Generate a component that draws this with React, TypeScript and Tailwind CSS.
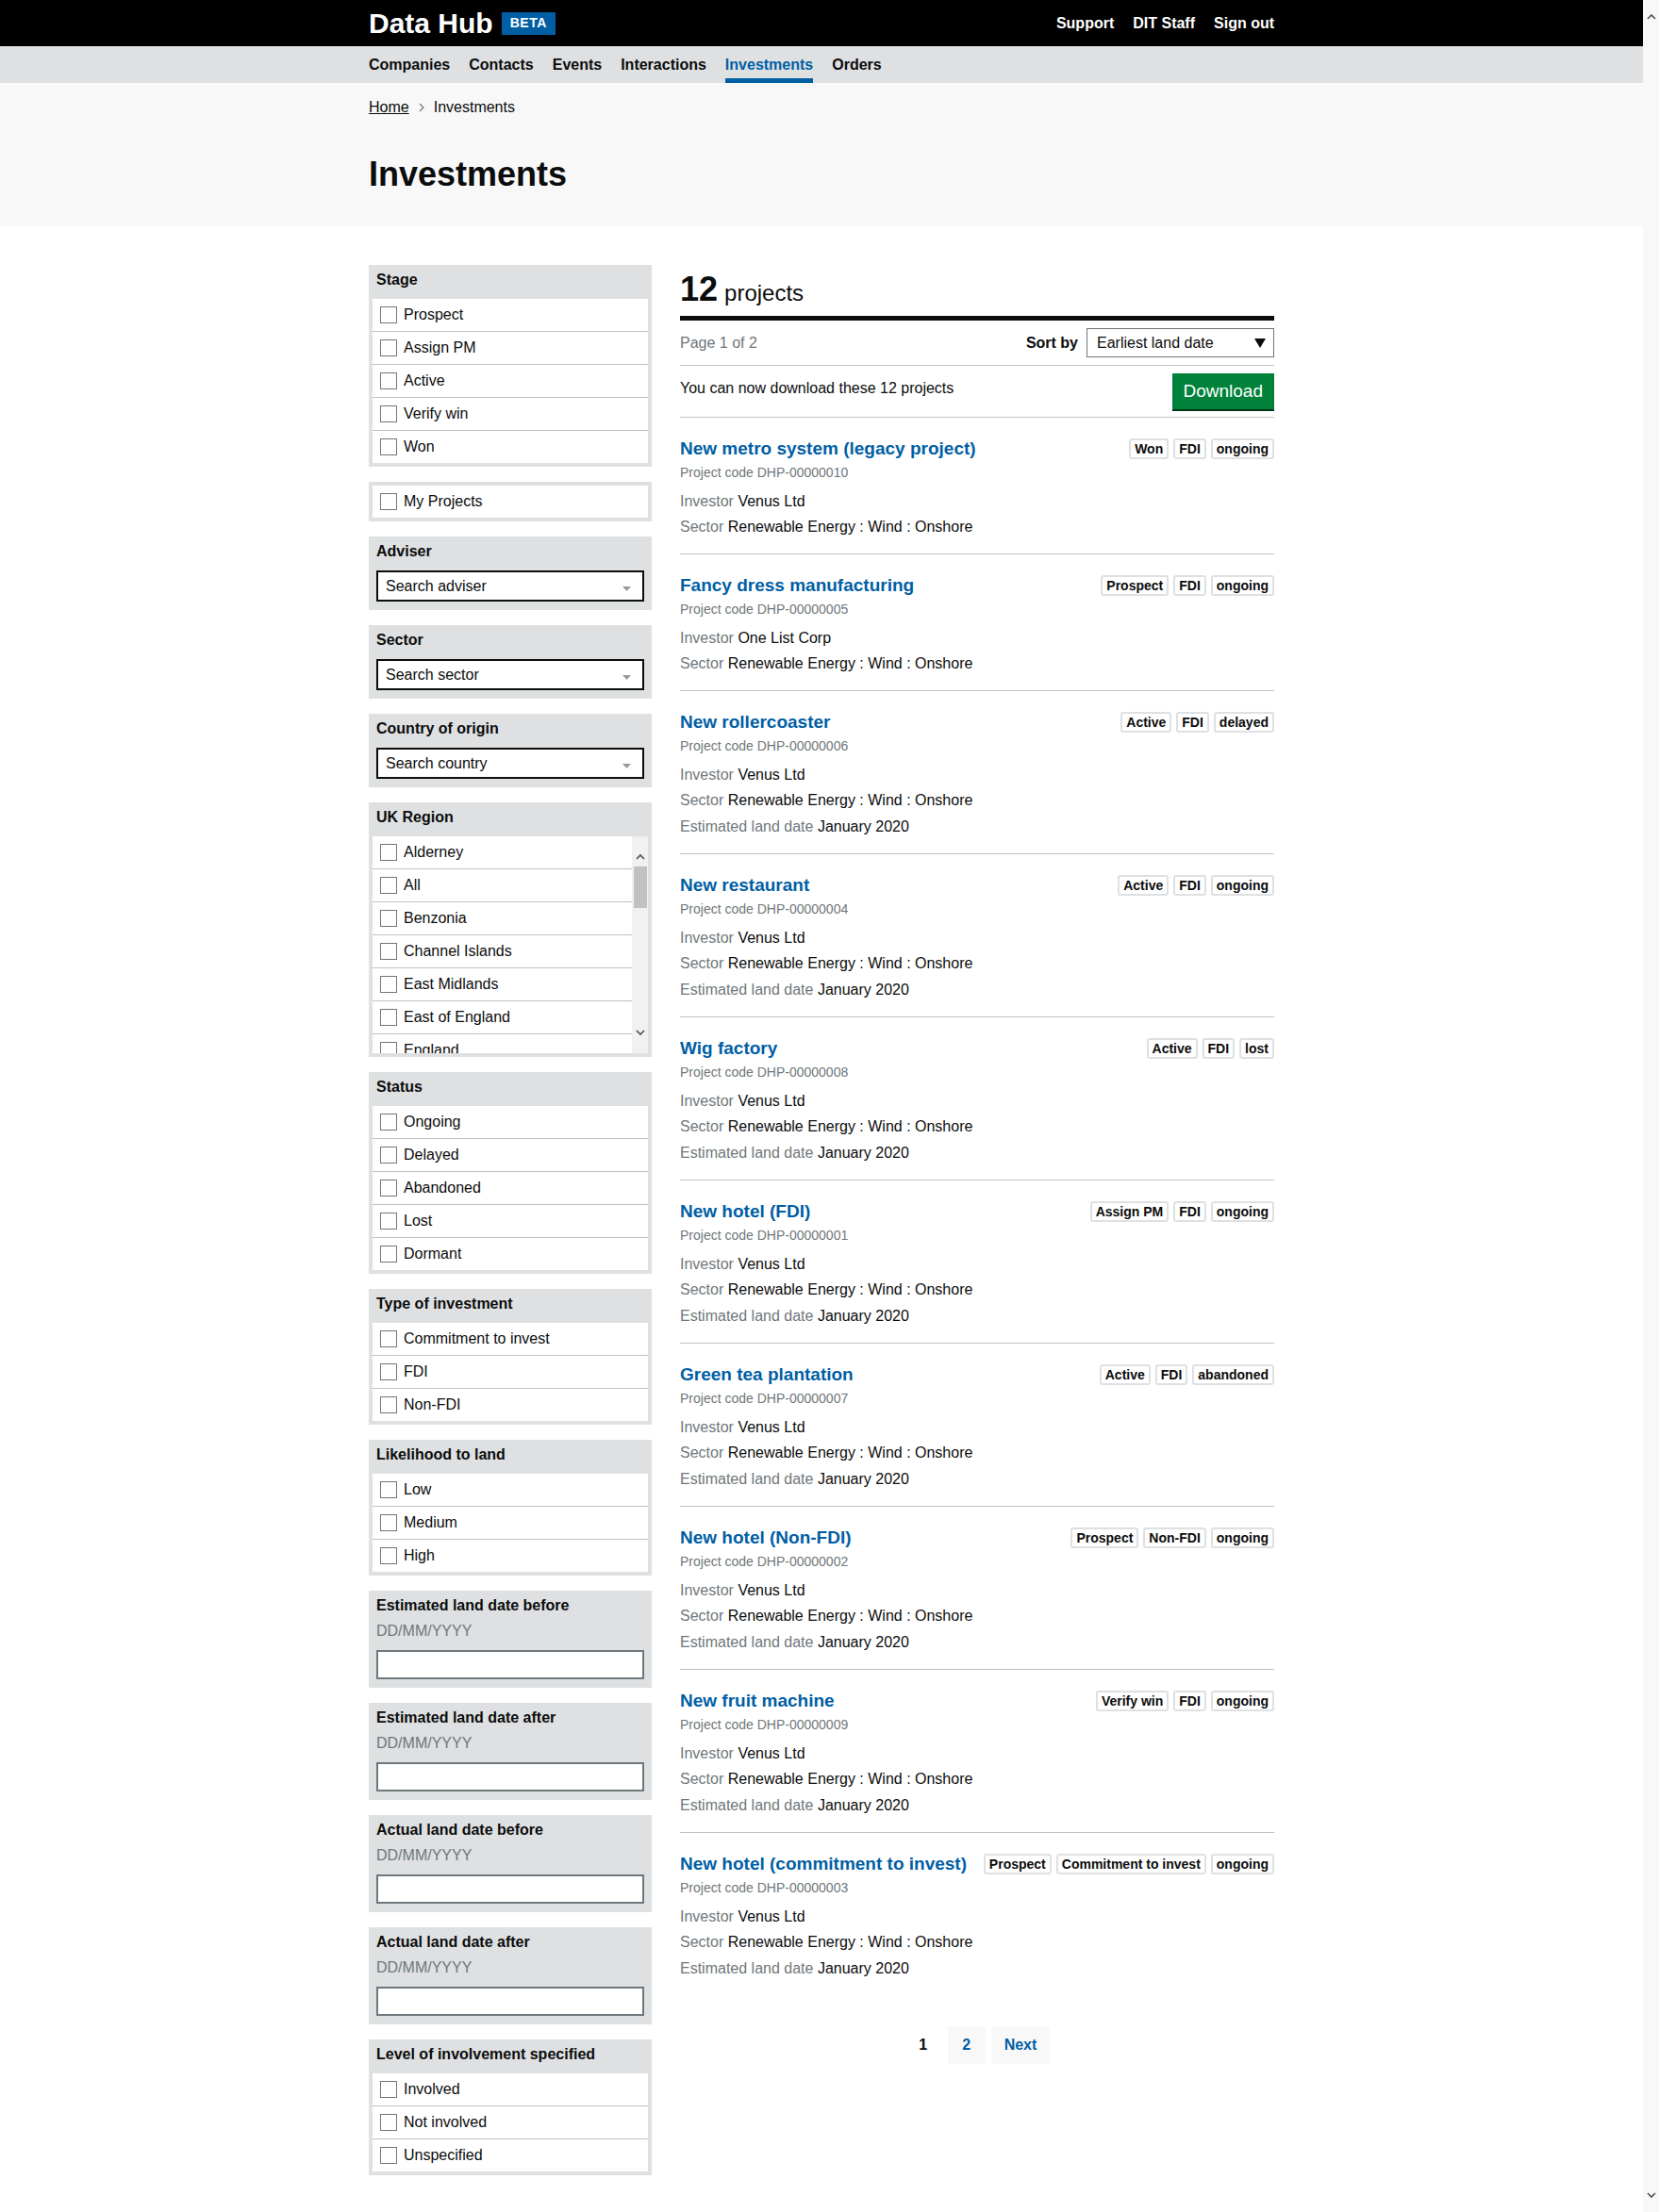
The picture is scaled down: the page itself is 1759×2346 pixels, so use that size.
import React from 'react'

// Data Hub — investment projects list with the filter sidebar
const stages = ['Prospect', 'Assign PM', 'Active', 'Verify win', 'Won']
const regions = ['Alderney', 'All', 'Benzonia', 'Channel Islands', 'East Midlands', 'East of England', 'England']
const statuses = ['Ongoing', 'Delayed', 'Abandoned', 'Lost', 'Dormant']
const types = ['Commitment to invest', 'FDI', 'Non-FDI']
const likelihood = ['Low', 'Medium', 'High']
const involvement = ['Involved', 'Not involved', 'Unspecified']
const dateFilters = ['Estimated land date before', 'Estimated land date after', 'Actual land date before', 'Actual land date after']

const projects = [
  { name: 'New metro system (legacy project)', tags: ['Won', 'FDI', 'ongoing'], code: 'DHP-00000010', investor: 'Venus Ltd', date: '' },
  { name: 'Fancy dress manufacturing', tags: ['Prospect', 'FDI', 'ongoing'], code: 'DHP-00000005', investor: 'One List Corp', date: '' },
  { name: 'New rollercoaster', tags: ['Active', 'FDI', 'delayed'], code: 'DHP-00000006', investor: 'Venus Ltd', date: 'January 2020' },
  { name: 'New restaurant', tags: ['Active', 'FDI', 'ongoing'], code: 'DHP-00000004', investor: 'Venus Ltd', date: 'January 2020' },
  { name: 'Wig factory', tags: ['Active', 'FDI', 'lost'], code: 'DHP-00000008', investor: 'Venus Ltd', date: 'January 2020' },
  { name: 'New hotel (FDI)', tags: ['Assign PM', 'FDI', 'ongoing'], code: 'DHP-00000001', investor: 'Venus Ltd', date: 'January 2020' },
  { name: 'Green tea plantation', tags: ['Active', 'FDI', 'abandoned'], code: 'DHP-00000007', investor: 'Venus Ltd', date: 'January 2020' },
  { name: 'New hotel (Non-FDI)', tags: ['Prospect', 'Non-FDI', 'ongoing'], code: 'DHP-00000002', investor: 'Venus Ltd', date: 'January 2020' },
  { name: 'New fruit machine', tags: ['Verify win', 'FDI', 'ongoing'], code: 'DHP-00000009', investor: 'Venus Ltd', date: 'January 2020' },
  { name: 'New hotel (commitment to invest)', tags: ['Prospect', 'Commitment to invest', 'ongoing'], code: 'DHP-00000003', investor: 'Venus Ltd', date: 'January 2020' },
]

function Chevron({ up }: { up?: boolean }) {
  return (
    <svg width="10" height="7" viewBox="0 0 10 7">
      <path d={up ? 'M1 6 L5 2 L9 6' : 'M1 1 L5 5 L9 1'} fill="none" stroke="#505050" strokeWidth="1.6" />
    </svg>
  )
}

function CheckRow({ label }: { label: string }) {
  return (
    <div className="h-[35px] last:h-[34px] flex items-center pl-[8px] gap-[7px] text-[16px] text-[#0b0c0c] shrink-0">
      <span className="w-[18px] h-[18px] border border-[#6f777b] bg-white shrink-0" />
      <span>{label}</span>
    </div>
  )
}

function Block({ title, children }: { title?: string; children: React.ReactNode }) {
  return (
    <div className="bg-[#dee0e2] p-[4px]">
      {title && <div className="h-[32px] pt-[2px] px-[4px] text-[16px] leading-[20px] font-bold text-[#0b0c0c]">{title}</div>}
      {children}
    </div>
  )
}

function CheckBlock({ title, items }: { title?: string; items: string[] }) {
  return (
    <Block title={title}>
      <div className="bg-white divide-y divide-[#bfc1c3]">
        {items.map(i => <CheckRow key={i} label={i} />)}
      </div>
    </Block>
  )
}

function SearchBlock({ title, placeholder }: { title: string; placeholder: string }) {
  return (
    <Block title={title}>
      <div className="mx-[4px] mb-[5px] h-[33px] border-2 border-[#0b0c0c] bg-white flex items-center justify-between pl-[8px] pr-[12px] text-[16px] text-[#0b0c0c]">
        <span>{placeholder}</span>
        <svg width="9" height="5" viewBox="0 0 9 5" className="mt-[6px]"><path d="M0 0 L9 0 L4.5 5 Z" fill="#999" /></svg>
      </div>
    </Block>
  )
}

function DateBlock({ title }: { title: string }) {
  return (
    <div className="bg-[#dee0e2] px-[8px] pt-[6px] pb-[9px]">
      <div className="text-[16px] leading-[20px] font-bold text-[#0b0c0c]">{title}</div>
      <div className="mt-[7px] text-[16px] leading-[20px] text-[#6f777b]">DD/MM/YYYY</div>
      <div className="mt-[10px] h-[31px] border-2 border-[#6f777b] bg-white" />
    </div>
  )
}

function Tag({ label }: { label: string }) {
  return (
    <span className="whitespace-nowrap border-2 border-[#dee0e2] rounded-[3px] px-[4px] text-[14px] leading-[18px] font-bold text-[#0b0c0c] bg-white">{label}</span>
  )
}

function Project({ p, last }: { p: typeof projects[number]; last: boolean }) {
  return (
    <div className={`pt-[20px] pb-[17px] ${last ? '' : 'border-b border-[#bfc1c3]'}`}>
      <div className="flex items-start justify-between gap-[5px]">
        <a className="text-[19px] leading-[25px] font-bold text-[#005ea5] whitespace-nowrap">{p.name}</a>
        <div className="flex gap-[5px] mt-[2px]">
          {p.tags.map(t => <Tag key={t} label={t} />)}
        </div>
      </div>
      <div className="mt-[3px] text-[14px] leading-[20px] text-[#6f777b]">Project code {p.code}</div>
      <div className="mt-[10px] text-[16px] leading-[22px]"><span className="text-[#6f777b]">Investor</span> <span className="text-[#0b0c0c]">{p.investor}</span></div>
      <div className="mt-[5px] text-[16px] leading-[22px]"><span className="text-[#6f777b]">Sector</span> <span className="text-[#0b0c0c]">Renewable Energy : Wind : Onshore</span></div>
      {p.date && (
        <div className="mt-[6px] text-[16px] leading-[22px]"><span className="text-[#6f777b]">Estimated land date</span> <span className="text-[#0b0c0c]">{p.date}</span></div>
      )}
    </div>
  )
}

export default function App() {
  return (
    <div className="flex h-[2346px] w-[1759px] overflow-hidden font-['Liberation_Sans',Arial,sans-serif] text-[#0b0c0c]">
      <div className="w-[1742px] shrink-0 bg-white">
        {/* header */}
        <header className="h-[49px] bg-black">
          <div className="w-[960px] mx-auto h-full flex items-center justify-between">
            <div className="flex items-center">
              <span className="text-[30px] leading-[34px] font-bold text-white">Data Hub</span>
              <span className="ml-[9px] h-[24px] px-[9px] flex items-center bg-[#005ea5] text-white text-[14px] font-bold tracking-[0.5px]">BETA</span>
            </div>
            <nav className="flex gap-[20px] text-[16px] font-bold text-white">
              <a>Support</a>
              <a>DIT Staff</a>
              <a>Sign out</a>
            </nav>
          </div>
        </header>
        <div className="h-[39px] bg-[#dee0e2]">
          <div className="w-[960px] mx-auto flex gap-[20px] text-[16px] font-bold">
            {['Companies', 'Contacts', 'Events', 'Interactions', 'Investments', 'Orders'].map(n => (
              <a key={n} className={`h-[39px] pt-[10px] leading-[20px] border-b-[5px] ${n === 'Investments' ? 'border-[#005ea5] text-[#005ea5]' : 'border-transparent text-[#0b0c0c]'}`}>{n}</a>
            ))}
          </div>
        </div>

        {/* page title */}
        <div className="bg-[#f8f8f8] h-[152px]">
          <div className="w-[960px] mx-auto pt-[16px]">
            <div className="flex items-center text-[16px] leading-[20px]">
              <a className="underline text-[#0b0c0c]">Home</a>
              <svg width="6" height="10" viewBox="0 0 6 10" className="mx-[10px]"><path d="M1 1 L5 5 L1 9" fill="none" stroke="#6f777b" strokeWidth="1.2" /></svg>
              <span>Investments</span>
            </div>
            <h1 className="mt-[41px] text-[36px] leading-[40px] font-bold">Investments</h1>
          </div>
        </div>

        <div className="w-[960px] mx-auto pt-[41px] flex gap-[30px] items-start">
          {/* filters */}
          <aside className="w-[300px] shrink-0 flex flex-col gap-[16px]">
            <CheckBlock title="Stage" items={stages} />
            <CheckBlock items={['My Projects']} />
            <SearchBlock title="Adviser" placeholder="Search adviser" />
            <SearchBlock title="Sector" placeholder="Search sector" />
            <SearchBlock title="Country of origin" placeholder="Search country" />
            <Block title="UK Region">
              <div className="h-[230px] flex bg-white">
                <div className="flex-1 overflow-hidden flex flex-col divide-y divide-[#bfc1c3]">
                  {regions.map(r => <CheckRow key={r} label={r} />)}
                </div>
                <div className="w-[17px] bg-[#f1f1f1] flex flex-col items-center">
                  <div className="mt-[18px]"><Chevron up /></div>
                  <div className="mt-[7px] w-[14px] h-[44px] bg-[#c1c1c1]" />
                  <div className="flex-1" />
                  <div className="mb-[18px]"><Chevron /></div>
                </div>
              </div>
            </Block>
            <CheckBlock title="Status" items={statuses} />
            <CheckBlock title="Type of investment" items={types} />
            <CheckBlock title="Likelihood to land" items={likelihood} />
            {dateFilters.map(d => <DateBlock key={d} title={d} />)}
            <CheckBlock title="Level of involvement specified" items={involvement} />
          </aside>

          {/* results */}
          <main className="flex-1 min-w-0">
            <h2 className="mt-[6px] h-[40px] flex items-baseline">
              <span className="text-[36px] leading-[40px] font-bold">12</span>
              <span className="text-[24px] leading-[40px] ml-[7px]">projects</span>
            </h2>
            <div className="mt-[8px] h-[5px] bg-[#0b0c0c]" />
            <div className="pt-[8px] pb-[8px] border-b border-[#bfc1c3] flex items-center justify-between">
              <span className="text-[16px] text-[#6f777b]">Page 1 of 2</span>
              <div className="flex items-center gap-[9px]">
                <span className="text-[16px] font-bold">Sort by</span>
                <div className="w-[199px] h-[31px] border border-[#6f777b] bg-white flex items-center justify-between pl-[10px] pr-[8px] text-[16px]">
                  <span>Earliest land date</span>
                  <svg width="12" height="10" viewBox="0 0 12 10"><path d="M0 0 L12 0 L6 10 Z" fill="#0b0c0c" /></svg>
                </div>
              </div>
            </div>
            <div className="pt-[8px] pb-[6px] border-b border-[#bfc1c3] flex items-start justify-between">
              <span className="mt-[6px] text-[16px] leading-[20px]">You can now download these 12 projects</span>
              <button className="h-[38px] px-[12px] bg-[#00823b] text-white text-[19px] shadow-[0_2px_0_#003618] mb-[2px]">Download</button>
            </div>
            {projects.map((p, i) => <Project key={p.code} p={p} last={i === projects.length - 1} />)}
            <div className="mt-[33px] flex justify-center gap-[6px] text-[16px] font-bold">
              <span className="w-[40px] h-[40px] flex items-center justify-center text-[#0b0c0c]">1</span>
              <a className="w-[40px] h-[40px] flex items-center justify-center bg-[#f8f8f8] text-[#005ea5]">2</a>
              <a className="h-[40px] px-[14px] flex items-center justify-center bg-[#f8f8f8] text-[#005ea5]">Next</a>
            </div>
          </main>
        </div>
      </div>

      {/* browser scrollbar */}
      <div className="w-[17px] shrink-0 bg-[#f8f8f8] flex flex-col items-center justify-between py-[14px]">
        <Chevron up />
        <Chevron />
      </div>
    </div>
  )
}
